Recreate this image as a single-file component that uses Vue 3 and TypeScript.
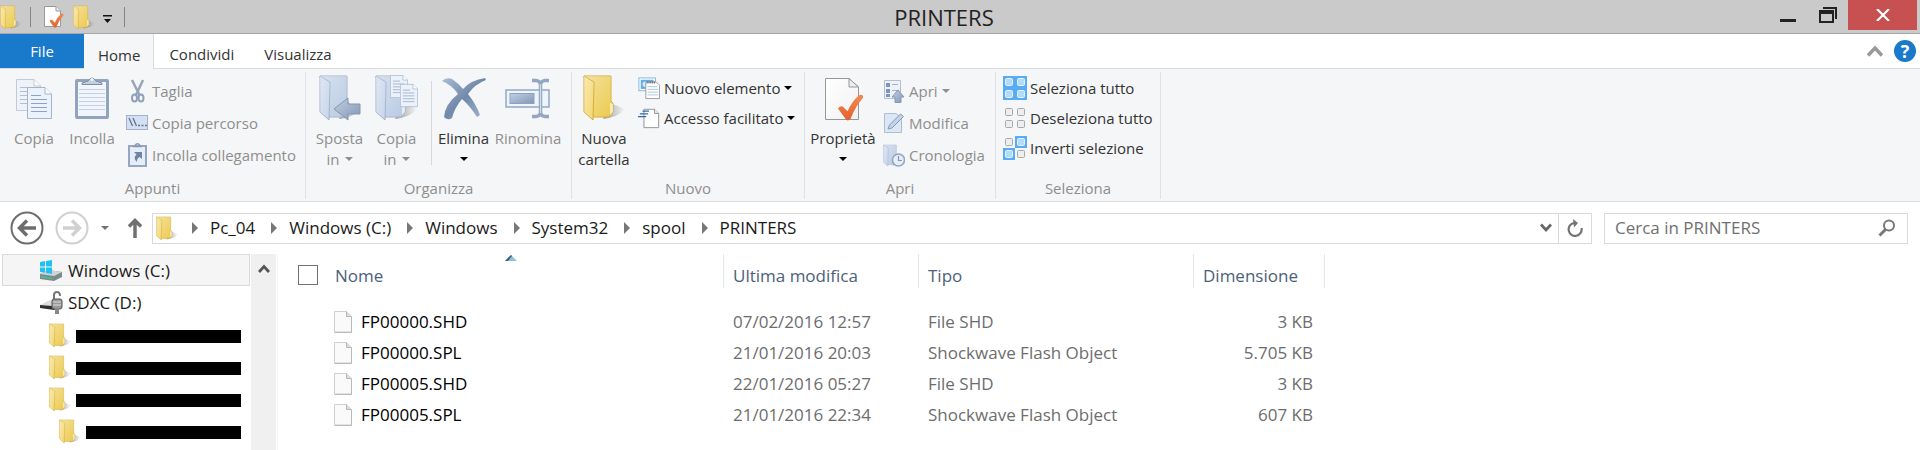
<script setup lang="ts">
import { ref } from 'vue'

interface BigItem {
  label: string
  second?: string
  icon: string
  menu?: boolean
  disabled?: boolean
  divided?: boolean
}
interface SmallItem {
  label: string
  icon: string
  menu?: boolean
  disabled?: boolean
}
interface Group {
  title: string
  key: string
  big: BigItem[]
  small: SmallItem[]
}
interface FileRow {
  name: string
  modified: string
  type: string
  size: string
}

const groups: Group[] = [
  {
    title: 'Appunti',
    key: 'clipboard',
    big: [
      { label: 'Copia', icon: 'copy', disabled: true },
      { label: 'Incolla', icon: 'paste', disabled: true },
    ],
    small: [
      { label: 'Taglia', icon: 'cut', disabled: true },
      { label: 'Copia percorso', icon: 'path', disabled: true },
      { label: 'Incolla collegamento', icon: 'paste-link', disabled: true },
    ],
  },
  {
    title: 'Organizza',
    key: 'organize',
    big: [
      { label: 'Sposta', second: 'in', icon: 'move-to', menu: true, disabled: true },
      { label: 'Copia', second: 'in', icon: 'copy-to', menu: true, disabled: true },
      { label: 'Elimina', icon: 'delete', menu: true, divided: true },
      { label: 'Rinomina', icon: 'rename', disabled: true },
    ],
    small: [],
  },
  {
    title: 'Nuovo',
    key: 'new',
    big: [{ label: 'Nuova', second: 'cartella', icon: 'folder' }],
    small: [
      { label: 'Nuovo elemento', icon: 'new-item', menu: true },
      { label: 'Accesso facilitato', icon: 'easy-access', menu: true },
    ],
  },
  {
    title: 'Apri',
    key: 'open',
    big: [{ label: 'Proprietà', icon: 'properties', menu: true }],
    small: [
      { label: 'Apri', icon: 'open', menu: true, disabled: true },
      { label: 'Modifica', icon: 'edit', disabled: true },
      { label: 'Cronologia', icon: 'history', disabled: true },
    ],
  },
  {
    title: 'Seleziona',
    key: 'select',
    big: [],
    small: [
      { label: 'Seleziona tutto', icon: 'select-all' },
      { label: 'Deseleziona tutto', icon: 'select-none' },
      { label: 'Inverti selezione', icon: 'select-invert' },
    ],
  },
]

const crumbs: string[] = ['Pc_04', 'Windows (C:)', 'Windows', 'System32', 'spool', 'PRINTERS']

const hiddenFolders: { id: number; deep: boolean }[] = [
  { id: 1, deep: false },
  { id: 2, deep: false },
  { id: 3, deep: false },
  { id: 4, deep: true },
]

const files: FileRow[] = [
  { name: 'FP00000.SHD', modified: '07/02/2016 12:57', type: 'File SHD', size: '3 KB' },
  { name: 'FP00000.SPL', modified: '21/01/2016 20:03', type: 'Shockwave Flash Object', size: '5.705 KB' },
  { name: 'FP00005.SHD', modified: '22/01/2016 05:27', type: 'File SHD', size: '3 KB' },
  { name: 'FP00005.SPL', modified: '21/01/2016 22:34', type: 'Shockwave Flash Object', size: '607 KB' },
]

const query = ref('')
const allSelected = ref(false)
</script>

<template>
  <div class="window">
    <svg class="sprites" aria-hidden="true">
      <defs>
        <linearGradient id="g-shine" x1="0" y1="0" x2="1" y2="1">
          <stop offset="0" stop-color="#fff" stop-opacity="0.45" />
          <stop offset="1" stop-color="#fff" stop-opacity="0" />
        </linearGradient>
        <linearGradient id="g-shadow" x1="0" y1="0" x2="1" y2="0">
          <stop offset="0" stop-color="#777" stop-opacity="0.7" />
          <stop offset="1" stop-color="#777" stop-opacity="0" />
        </linearGradient>
        <linearGradient id="g-x" x1="0" y1="0" x2="1" y2="1">
          <stop offset="0" stop-color="#a9bdd8" />
          <stop offset="0.5" stop-color="#7189aa" />
          <stop offset="1" stop-color="#a3b8d4" />
        </linearGradient>
        <linearGradient id="g-steel" x1="0" y1="0" x2="1" y2="1">
          <stop offset="0" stop-color="#c3d0e2" />
          <stop offset="1" stop-color="#8196b5" />
        </linearGradient>
        <linearGradient id="g-check" x1="0" y1="0" x2="0" y2="1">
          <stop offset="0" stop-color="#f08a55" />
          <stop offset="1" stop-color="#e2622c" />
        </linearGradient>
        <linearGradient id="g-page" x1="0" y1="0" x2="1" y2="1">
          <stop offset="0" stop-color="#fff" />
          <stop offset="1" stop-color="#f1f1f1" />
        </linearGradient>
      </defs>
      <symbol id="folder" viewBox="0 0 42 46">
        <path d="M27 28 L42 34 Q36 42 20 44 Z" fill="url(#g-shadow)" />
        <path d="M1 1 H28 V26 L30 28 V37 L26 42 H10 Z" fill="var(--folder)" stroke="var(--folder-line)" />
        <path d="M1 1 H28 V26 L30 28 V37 L26 42 H10 Z" fill="url(#g-shine)" />
        <path d="M27 28 L30 29 V37 L27 40 Z" fill="#fff" opacity="0.6" />
        <path d="M1 1 L11 7 L10 45 L1 37 Z" fill="var(--folder-dark)" stroke="var(--folder-line)" />
        <path d="M1 1 L11 7 L10 45 L1 37 Z" fill="url(#g-shine)" />
      </symbol>
      <symbol id="sheet" viewBox="0 0 25 32">
        <path d="M.5 .5 H18 L24.500 7 V31.500 H.5 Z" fill="#ecf2fb" stroke="#a3b4cc" />
        <path d="M18 .5 V7 H24.500" fill="#fff" stroke="#a3b4cc" />
        <path d="M4 8.500 H14 M4 12.500 H20 M4 16.500 H20 M4 20.500 H20 M4 24.500 H20" stroke="#8fa2bf" />
      </symbol>
      <symbol id="copy" viewBox="0 0 42 46">
        <use href="#sheet" x="3" y="4" width="25" height="32" opacity="0.65" />
        <use href="#sheet" x="14" y="12" width="25" height="32" />
      </symbol>
      <symbol id="paste" viewBox="0 0 42 46">
        <rect x="4" y="4" width="34" height="40" rx="2" fill="#92a3bd" />
        <path d="M7 7 H35 V41 H7 Z" fill="#f1f5fc" />
        <path d="M8 14.500 H34 M8 18.500 H34 M8 22.500 H34 M8 26.500 H34 M8 30.500 H34 M8 34.500 H34" stroke="#c5d1e3" />
        <path d="M11 9.500 H31 V8 L25 6 Q21 0 17 6 L11 8 Z" fill="#c4cedd" stroke="#7d8ea9" />
        <circle cx="21" cy="4.500" r="1.500" fill="#f4f6f8" />
      </symbol>
      <symbol id="cut" viewBox="0 0 22 24">
        <path d="M6 1 L13.500 16 M17 1 L10 16" stroke="#97a5bb" stroke-width="2.500" />
        <ellipse cx="8.500" cy="19" rx="2.500" ry="3.500" fill="none" stroke="#8fa0b9" stroke-width="2" />
        <ellipse cx="15" cy="19" rx="2.500" ry="3.500" fill="none" stroke="#8fa0b9" stroke-width="2" />
      </symbol>
      <symbol id="path" viewBox="0 0 22 24">
        <rect x=".5" y="4.500" width="21" height="14" fill="#d5e1f2" stroke="#a1b2cc" />
        <path d="M3 7 L6.500 15 M7 7 L10.500 15" stroke="#61738f" stroke-width="1.300" />
        <path d="M12 14.500 h2 M15.500 14.500 h2 M19 14.500 h2" stroke="#61738f" stroke-width="1.600" />
      </symbol>
      <symbol id="paste-link" viewBox="0 0 22 24">
        <rect x="3" y="3" width="17" height="20" fill="#e5edf8" stroke="#94a6c2" stroke-width="2" />
        <path d="M7 3.500 h9 M9 2.500 Q11.500 -1 14 2.500" fill="none" stroke="#8798b4" stroke-width="1.500" />
        <path d="M8 9 H16 V16 L13.500 14 Q10.500 16 11 19 Q6.500 15 10.500 11.500 Z" fill="#6f83a4" />
      </symbol>
      <symbol id="move-to" viewBox="0 0 42 46">
        <use href="#folder" width="42" height="46" class="folder-off" />
        <path d="M15 34 L29 23 V29 H41 V39 H29 V45 Z" fill="url(#g-steel)" stroke="#8396b3" />
      </symbol>
      <symbol id="copy-to" viewBox="0 0 44 46">
        <use href="#folder" width="42" height="46" class="folder-off" />
        <use href="#sheet" x="15" y="0" width="18" height="23" />
        <use href="#sheet" x="25" y="8" width="18" height="25" />
      </symbol>
      <symbol id="delete" viewBox="0 0 46 46">
        <path d="M1 6 Q5 2 11 4 Q17 8 22 14 Q30 5 44 3 L45 5 Q34 9 27 19 Q35 29 39 40 L36 42 Q29 31 21 24 Q14 32 11 43 Q7 46 3 42 Q4 29 17 19 Q11 10 1 6 Z" fill="url(#g-x)" />
      </symbol>
      <symbol id="rename" viewBox="0 0 46 46">
        <rect x="1" y="15" width="43" height="17" fill="#edf4fc" stroke="#91a8c7" stroke-width="1.500" />
        <rect x="5" y="18.500" width="24" height="10" fill="url(#g-steel)" stroke="#8ea2bf" />
        <path d="M27 5.500 H31 Q35.500 6 35.500 10 V37 Q35.500 41 31 41.500 H27 M44 5.500 H40 Q35.500 6 35.500 10 M44 41.500 H40 Q35.500 41 35.500 37" fill="none" stroke="#93a7c3" stroke-width="3.500" />
        <path d="M35.500 9 V38" stroke="#cfdbea" stroke-width="1.200" />
      </symbol>
      <symbol id="new-item" viewBox="0 0 24 24">
        <rect x="1" y="1" width="18" height="14" fill="#fff" stroke="#7fb3dc" />
        <rect x="3" y="3" width="14" height="10" fill="#64aee6" />
        <circle cx="8" cy="8" r="3" fill="#d5edfb" />
        <path d="M8.500 5.500 H20 L23.500 9 V23.500 H8.500 Z" fill="#fdfdfd" stroke="#999" />
        <path d="M10 5 v2 M12 5 v2 M14 5 v2 M16 5 v2 M18 5 v2" stroke="#555" />
        <path d="M10.500 10.500 H21 M10.500 13.500 H22 M10.500 16.500 H22 M10.500 19.500 H22" stroke="#a9c4da" />
      </symbol>
      <symbol id="easy-access" viewBox="0 0 24 24">
        <path d="M6.500 2.500 H18 L22.500 7 V22.500 H6.500 Z" fill="#fff" stroke="#8d8d8d" />
        <path d="M18 2.500 V7 H22.500" fill="#eee" stroke="#8d8d8d" />
        <path d="M5 4.500 H12 M2 7.500 H11 M0 10.500 H9" stroke="#2d6bb2" stroke-width="1.500" />
      </symbol>
      <symbol id="check" viewBox="0 0 28 28">
        <path d="M1 15 Q4 11 7 14 L11 18 Q15 8 23 1 Q28 0 27 4 Q19 13 14 26 Q11 29 9 26 Z" fill="url(#g-check)" />
      </symbol>
      <symbol id="properties" viewBox="0 0 42 46">
        <path d="M3.500 3.500 H27 L36.500 12 V44.500 H3.500 Z" fill="url(#g-page)" stroke="#979797" />
        <path d="M27 3.500 V12 H36.500 Z" fill="#eee" stroke="#979797" />
        <use href="#check" x="15" y="19" width="27" height="27" />
      </symbol>
      <symbol id="open" viewBox="0 0 22 24">
        <path d="M1.500 1.500 H17.500 V19.500 H1.500 Z" fill="#edf2fa" stroke="#b2bfd2" />
        <path d="M3 4 h4 v4 h-4 Z M3 10 h4 v4 h-4 Z M3 15 h4 v3 h-4 Z" fill="#7e94b8" />
        <path d="M9 5.500 h6 M9 11.500 h6" stroke="#a2b1c8" />
        <path d="M15 11 L21 18 H18 V23.500 H12 V18 H9 Z" fill="url(#g-steel)" stroke="#8698b3" />
      </symbol>
      <symbol id="edit" viewBox="0 0 22 24">
        <path d="M1.500 2.500 H13 L18.500 7 V21.500 H1.500 Z" fill="#dce7f6" stroke="#adbdd4" />
        <path d="M5 18 L6.500 14 L17.500 3 L20.500 5.500 L9 17 Z" fill="#c5d3e8" stroke="#8499b8" />
      </symbol>
      <symbol id="history" viewBox="0 0 22 24">
        <use href="#folder" x="0" y="1" width="20" height="23" class="folder-off" />
        <circle cx="15.500" cy="17" r="6" fill="#e7eef8" stroke="#90a4c1" stroke-width="1.500" />
        <path d="M15.500 13 V17.500 H19" fill="none" stroke="#8297b6" stroke-width="1.200" />
      </symbol>
      <symbol id="tile-on" viewBox="0 0 12 12">
        <rect width="12" height="12" fill="#5aabf5" />
        <rect x="2.500" y="2.500" width="7" height="7" rx="1" fill="#b4dcfa" stroke="#e2f2fe" />
      </symbol>
      <symbol id="tile-off" viewBox="0 0 12 12">
        <rect x="2.500" y="2.500" width="7" height="7" rx="1" fill="#eee" stroke="#a8a8a8" />
      </symbol>
      <symbol id="select-all" viewBox="0 0 24 24">
        <use href="#tile-on" width="12" height="12" />
        <use href="#tile-on" x="12" width="12" height="12" />
        <use href="#tile-on" y="12" width="12" height="12" />
        <use href="#tile-on" x="12" y="12" width="12" height="12" />
      </symbol>
      <symbol id="select-none" viewBox="0 0 24 24">
        <use href="#tile-off" width="12" height="12" />
        <use href="#tile-off" x="12" width="12" height="12" />
        <use href="#tile-off" y="12" width="12" height="12" />
        <use href="#tile-off" x="12" y="12" width="12" height="12" />
      </symbol>
      <symbol id="select-invert" viewBox="0 0 24 24">
        <use href="#tile-off" width="12" height="12" />
        <use href="#tile-on" x="12" width="12" height="12" />
        <use href="#tile-on" y="12" width="12" height="12" />
        <use href="#tile-off" x="12" y="12" width="12" height="12" />
      </symbol>
      <symbol id="file" viewBox="0 0 18 22">
        <path d="M.5 .5 H12.500 L17.500 5.500 V21 H.5 Z" fill="#fafafa" stroke="#cfcfcf" />
        <path d="M.5 21.500 H17.500 V6" fill="none" stroke="#b9b9b9" />
        <path d="M12.500 .5 V5.500 H17.500" fill="#ddd" stroke="#b5b5b5" />
      </symbol>
      <symbol id="caret" viewBox="0 0 8 4">
        <path d="M0 0 H8 L4 4 Z" fill="currentColor" />
      </symbol>
    </svg>

    <header class="titlebar">
      <div class="quick">
        <button class="plain" type="button" aria-label="Finestra"><svg class="i-folder"><use href="#folder" /></svg></button>
        <span class="bar"></span>
        <button class="plain" type="button" aria-label="Proprietà">
          <svg class="i-quick" viewBox="0 0 22 24">
            <path d="M1.500 1.500 H13 L17.500 6 V21.500 H1.500 Z" fill="#fff" stroke="#999" />
            <path d="M13 1.500 V6 H17.500" fill="#eee" stroke="#999" />
            <use href="#check" x="6" y="8" width="15" height="15" />
          </svg>
        </button>
        <button class="plain" type="button" aria-label="Nuova cartella"><svg class="i-folder"><use href="#folder" /></svg></button>
        <button class="plain" type="button" aria-label="Personalizza">
          <svg class="i-custom" viewBox="0 0 9 9"><path d="M0 0 H9 V1.500 H0 Z M1 4 H8 L4.500 8 Z" fill="#111" /></svg>
        </button>
        <span class="bar"></span>
      </div>
      <h1>PRINTERS</h1>
      <div class="controls">
        <button class="plain" type="button" aria-label="Riduci a icona">
          <svg class="i-ctl" viewBox="0 0 20 20"><path d="M2 14 H18 V17 H2 Z" fill="#222" /></svg>
        </button>
        <button class="plain" type="button" aria-label="Ripristina">
          <svg class="i-ctl" viewBox="0 0 20 20">
            <path d="M5 2 H19 V14 H17 V4 H5 Z" fill="#222" />
            <path fill-rule="evenodd" d="M1 5 H16 V18 H1 Z M3 9 V16 H14 V9 Z" fill="#222" />
          </svg>
        </button>
        <button class="plain close" type="button" aria-label="Chiudi">
          <svg class="i-close" viewBox="0 0 14 12"><path d="M1 0 L13 12 M13 0 L1 12" stroke="#fff" stroke-width="2.200" /></svg>
        </button>
      </div>
    </header>

    <nav class="tabs">
      <button class="tab file" type="button">File</button>
      <button class="tab active" type="button">Home</button>
      <button class="tab" type="button">Condividi</button>
      <button class="tab" type="button">Visualizza</button>
      <div class="tab-tools">
        <button class="plain" type="button" aria-label="Riduci barra multifunzione">
          <svg class="i-collapse" viewBox="0 0 16 12"><path d="M1 10.500 L8 3 L15 10.500" fill="none" stroke="#999" stroke-width="3.500" /></svg>
        </button>
        <button class="plain help" type="button">?</button>
      </div>
    </nav>

    <section class="ribbon">
      <div v-for="g in groups" :key="g.key" class="group" :class="g.key">
        <div class="group-body">
          <button
            v-for="b in g.big"
            :key="b.icon"
            class="big"
            :class="{ off: b.disabled, divided: b.divided }"
            type="button"
            :disabled="b.disabled"
          >
            <svg class="i-big"><use :href="'#' + b.icon" /></svg>
            <span class="line">{{ b.label }}</span>
            <span v-if="b.second || b.menu" class="line">
              <template v-if="b.second">{{ b.second }}</template>
              <svg v-if="b.menu" class="i-caret"><use href="#caret" /></svg>
            </span>
          </button>
          <div v-if="g.small.length" class="small-col">
            <button
              v-for="s in g.small"
              :key="s.icon"
              class="small"
              :class="{ off: s.disabled }"
              type="button"
              :disabled="s.disabled"
            >
              <svg class="i-small"><use :href="'#' + s.icon" /></svg>
              <span>{{ s.label }}</span>
              <svg v-if="s.menu" class="i-caret"><use href="#caret" /></svg>
            </button>
          </div>
        </div>
        <div class="group-title">{{ g.title }}</div>
      </div>
    </section>

    <div class="navbar">
      <button class="plain" type="button" aria-label="Indietro">
        <svg class="i-nav" viewBox="0 0 34 34">
          <circle cx="17" cy="17" r="15.500" fill="none" stroke="#6d6d6d" stroke-width="2" />
          <path d="M17 9.500 L9.500 17 L17 24.500 M10 17 H26" fill="none" stroke="#6d6d6d" stroke-width="3.500" />
        </svg>
      </button>
      <button class="plain forward" type="button" aria-label="Avanti">
        <svg class="i-nav" viewBox="0 0 34 34">
          <circle cx="17" cy="17" r="15.500" fill="none" stroke="#d0d0d0" stroke-width="2" />
          <path d="M17 9.500 L24.500 17 L17 24.500 M24 17 H8" fill="none" stroke="#d0d0d0" stroke-width="3.500" />
        </svg>
      </button>
      <button class="plain recent" type="button" aria-label="Percorsi recenti"><svg class="i-caret"><use href="#caret" /></svg></button>
      <button class="plain up" type="button" aria-label="Su">
        <svg class="i-up" viewBox="0 0 16 20"><path d="M2 8.500 L8 2.500 L14 8.500 M8 3 V20" fill="none" stroke="#707070" stroke-width="3.500" /></svg>
      </button>
      <div class="address">
        <svg class="i-folder"><use href="#folder" /></svg>
        <div class="crumbs">
          <span v-for="c in crumbs" :key="c" class="crumb">
            <svg class="i-sep" viewBox="0 0 6 12"><path d="M0 0 L6 6 L0 12 Z" fill="#777" /></svg>
            <a href="#">{{ c }}</a>
          </span>
        </div>
        <button class="plain drop" type="button" aria-label="Percorsi precedenti">
          <svg class="i-drop" viewBox="0 0 12 10"><path d="M1 1.500 L6 7 L11 1.500" fill="none" stroke="#666" stroke-width="2.800" /></svg>
        </button>
        <button class="plain refresh" type="button" aria-label="Aggiorna">
          <svg class="i-refresh" viewBox="0 0 18 18">
            <path d="M8 4 A6.500 6.500 0 1 0 15.500 9" fill="none" stroke="#737373" stroke-width="2.200" />
            <path d="M7 0 L12 4 L8 8.500 Z" fill="#737373" />
          </svg>
        </button>
      </div>
      <form class="search" @submit.prevent>
        <input v-model="query" type="text" placeholder="Cerca in PRINTERS" aria-label="Cerca in PRINTERS" />
        <button class="plain" type="submit" aria-label="Cerca">
          <svg class="i-search" viewBox="0 0 18 18">
            <circle cx="11" cy="6.500" r="5" fill="none" stroke="#777" stroke-width="2" />
            <path d="M7.500 10.500 L1.500 16.500" stroke="#777" stroke-width="3" />
          </svg>
        </button>
      </form>
    </div>

    <main class="content">
      <nav class="tree">
        <a class="node current" href="#">
          <svg class="i-drive" viewBox="0 0 24 24">
            <path d="M1 15 L9 11 L23 13 V18 L15 22 L1 20 Z" fill="#7b8b8b" />
            <path d="M1 15 L9 11 L23 13 L15 17 Z" fill="#cfd4d4" />
            <path d="M2 17 L13 19 V20 L2 18.500 Z" fill="#3ec79a" />
            <path d="M1 3 L6 2 V7.500 H1 Z M7 2 L13 1 V7.500 H7 Z M1 8.500 H6 V13.500 L1 13 Z M7 8.500 H13 V15 L7 14 Z" fill="#1fc3f3" />
          </svg>
          <span>Windows (C:)</span>
        </a>
        <a class="node" href="#">
          <svg class="i-drive" viewBox="0 0 24 24">
            <path d="M1 14 L11 9 L21 11 L14 15 Z" fill="#ddd" />
            <path d="M1 14 L14 15 L21 12 V16 L15 19 L1 17 Z" fill="#303030" />
            <path d="M15 8 V4 Q15 1 18 1 Q21 1 21 5" fill="none" stroke="#777" stroke-width="2" />
            <rect x="13" y="8" width="10" height="10" rx="2" fill="#999" stroke="#555" />
            <path d="M14 11 H22 M14 14 H22" stroke="#ddd" />
            <path d="M18 17 V23" stroke="#888" stroke-width="4" />
          </svg>
          <span>SDXC (D:)</span>
        </a>
        <a v-for="f in hiddenFolders" :key="f.id" class="node sub" :class="{ deep: f.deep }" href="#" aria-label="Cartella">
          <svg class="i-folder"><use href="#folder" /></svg>
          <span class="redacted"></span>
        </a>
      </nav>
      <div class="scroll">
        <button class="plain" type="button" aria-label="Scorri su">
          <svg class="i-drop" viewBox="0 0 12 10"><path d="M1 8 L6 2.500 L11 8" fill="none" stroke="#555" stroke-width="2.800" /></svg>
        </button>
      </div>
      <div class="list">
        <table>
          <colgroup>
            <col class="c-check" />
            <col class="c-name" />
            <col class="c-date" />
            <col class="c-type" />
            <col class="c-size" />
          </colgroup>
          <thead>
            <tr>
              <th><div class="head first"><input v-model="allSelected" type="checkbox" aria-label="Seleziona tutto" /></div></th>
              <th scope="col">
                <div class="head">
                  Nome
                  <svg class="i-sort" viewBox="0 0 12 6"><path d="M0 6 L6 0 L12 6 Z" fill="#8fc3dc" /><path d="M0 6 L6 0 L7 1 L3 6 Z" fill="#38607a" /></svg>
                </div>
              </th>
              <th scope="col"><div class="head">Ultima modifica</div></th>
              <th scope="col"><div class="head">Tipo</div></th>
              <th scope="col"><div class="head">Dimensione</div></th>
            </tr>
          </thead>
          <tbody>
            <tr v-for="f in files" :key="f.name">
              <td></td>
              <td class="name"><span><svg class="i-file"><use href="#file" /></svg>{{ f.name }}</span></td>
              <td>{{ f.modified }}</td>
              <td>{{ f.type }}</td>
              <td class="size">{{ f.size }}</td>
            </tr>
          </tbody>
        </table>
      </div>
    </main>
  </div>
</template>

<style>
body {
  background: #fff;
}
</style>

<style scoped>
.window {
  --folder: #ecca4e;
  --folder-dark: #f3d770;
  --folder-line: #d3ab36;
  display: flex;
  flex-direction: column;
  min-height: 100vh;
  overflow: hidden;
  font-family: "Open Sans", "Noto Sans", sans-serif;
  font-size: 17px;
  line-height: 20px;
  color: #1a1a1a;
}
*,
*::before {
  box-sizing: border-box;
}
svg {
  display: block;
  flex: none;
}
.sprites {
  position: absolute;
  width: 0;
  height: 0;
}
.folder-off {
  --folder: #b9cae2;
  --folder-dark: #c6d5ea;
  --folder-line: #a0b2cd;
}
button {
  border: 0;
  padding: 0;
  background: none;
  font: inherit;
  color: inherit;
}
a {
  color: inherit;
  text-decoration: none;
}
.plain {
  display: flex;
  align-items: center;
  justify-content: center;
}
.i-folder { width: 22px; height: 25px; }
.i-quick { width: 22px; height: 24px; }
.i-custom { width: 9px; height: 9px; }
.i-ctl { width: 20px; height: 20px; }
.i-close { width: 14px; height: 12px; }
.i-collapse { width: 16px; height: 12px; }
.i-big { width: 46px; height: 46px; }
.i-small { width: 22px; height: 24px; }
.i-caret { width: 8px; height: 4px; }
.i-nav { width: 34px; height: 34px; }
.i-up { width: 16px; height: 20px; }
.i-sep { width: 6px; height: 12px; }
.i-drop { width: 12px; height: 10px; }
.i-refresh { width: 18px; height: 18px; }
.i-search { width: 18px; height: 18px; }
.i-drive { width: 24px; height: 24px; }
.i-file { width: 18px; height: 22px; }

/* Title bar */
.titlebar {
  display: grid;
  grid-template-columns: 1fr auto 1fr;
  height: 34px;
  background: #cacaca;
  border-bottom: 1px solid #a6a6a6;
}
.quick {
  display: flex;
  align-items: center;
  gap: 8px;
  padding-bottom: 1px;
}
.quick .bar + .plain {
  margin-left: 4px;
}
.quick .i-custom {
  margin: 4px 4px 0 0;
}
.bar {
  width: 1px;
  height: 20px;
  background: #858585;
}
h1 {
  margin: 0 32px 0 0;
  font-size: 22px;
  line-height: 35px;
  font-weight: 400;
  color: #222;
}
.controls {
  display: flex;
  justify-content: flex-end;
  align-items: flex-start;
  padding-right: 3px;
}
.controls .plain {
  width: 40px;
  height: 30px;
}
.controls .close {
  width: 69px;
  background: #c75050;
}

/* Tabs */
.tabs {
  display: flex;
  height: 35px;
  border-bottom: 1px solid #d9dbdd;
  font-size: 15px;
  color: #333;
}
.tab {
  padding: 6px 15px 0;
}
.tab.file {
  width: 84px;
  padding: 0;
  background: #1979ca;
  color: #fff;
}
.tab.active {
  height: 35px;
  padding: 6px 13px 0 14px;
  border-right: 1px solid #d9dbdd;
  background: #f5f6f7;
}
.tab-tools {
  display: flex;
  align-items: center;
  gap: 11px;
  margin-left: auto;
  padding-right: 4px;
}
.help {
  width: 22px;
  height: 22px;
  border-radius: 50%;
  background: #1979ca;
  color: #fff;
  font-size: 18px;
  font-weight: 700;
}

/* Ribbon */
.ribbon {
  display: flex;
  height: 133px;
  border-bottom: 1px solid #d9dbdd;
  background: #f5f6f7;
  font-size: 15px;
  color: #333;
}
.group {
  display: flex;
  flex-direction: column;
  justify-content: space-between;
  margin: 3px 0 2px;
  border-right: 1px solid #dfe1e3;
}
.group-body {
  display: flex;
  padding: 3px 5px 0;
}
.group-title {
  padding-bottom: 1px;
  text-align: center;
  color: #8e8e8e;
}
.clipboard { width: 306px; }
.organize { width: 266px; }
.new { width: 233px; }
.open { width: 191px; }
.select { width: 165px; }
.big {
  display: flex;
  flex-direction: column;
  align-items: center;
  width: 58px;
  white-space: nowrap;
}
.organize .big { width: 57px; }
.organize .big:last-child { width: 72px; }
.open .big { width: 66px; }
.new .group-body { padding-left: 3px; }
.big .i-big {
  margin-bottom: 6px;
}
.big.divided {
  position: relative;
  margin-left: 10px;
}
.big.divided::before {
  content: "";
  position: absolute;
  left: -4px;
  top: 6px;
  width: 1px;
  height: 84px;
  background: #d6d8da;
}
.line {
  display: flex;
  align-items: center;
  justify-content: center;
  gap: 5px;
  height: 21px;
}
.off {
  color: #8e8e8e;
}
.small-col {
  display: flex;
  flex-direction: column;
  margin-left: 5px;
}
.small {
  display: flex;
  align-items: center;
  gap: 4px;
  height: 32px;
  white-space: nowrap;
}
.new .small,
.select .small {
  height: 30px;
}
.new .small-col,
.select .small-col {
  margin-top: -2px;
}
.open .small-col { margin-left: 7px; }
.select .small-col { margin-left: 2px; }
.select .small { gap: 3px; }
.select .i-small { width: 24px; }
.big:not(.off) .i-caret,
.small:not(.off) .i-caret {
  color: #000;
}

/* Navigation bar */
.navbar {
  display: flex;
  align-items: center;
  height: 52px;
  padding: 0 12px 0 10px;
}
.forward { margin-left: 11px; }
.recent { margin-left: 12px; color: #707070; }
.up { margin: 0 9px 0 18px; }
.address {
  display: flex;
  align-items: center;
  flex: 1;
  height: 31px;
  padding-left: 3px;
  border: 1px solid #d9d9d9;
}
.crumbs {
  display: flex;
  flex: 1;
}
.crumb {
  display: flex;
  align-items: center;
  gap: 12px;
  margin-left: 16px;
}
.crumb:first-child {
  margin-left: 14px;
}
.drop {
  width: 24px;
  height: 29px;
}
.refresh {
  width: 33px;
  height: 29px;
  border-left: 1px solid #d9d9d9;
}
.search {
  display: flex;
  align-items: center;
  width: 304px;
  height: 31px;
  margin-left: 12px;
  padding: 0 11px 0 10px;
  border: 1px solid #d9d9d9;
}
.search input {
  flex: 1;
  min-width: 0;
  padding: 0;
  border: 0;
  outline: 0;
  background: none;
  font: inherit;
}
.search input::placeholder {
  color: #707070;
  opacity: 1;
}

/* Content */
.content {
  display: flex;
  flex: 1;
}
.tree {
  width: 248px;
  margin: 0 1px 0 2px;
}
.node {
  display: flex;
  align-items: center;
  gap: 5px;
  height: 32px;
  padding: 2px 8px 0 36px;
  border: 1px solid transparent;
}
.node.current {
  background: #f5f5f5;
  border-color: #dadada;
}
.node.sub { padding-left: 46px; }
.node.deep { padding-left: 56px; }
.redacted {
  flex: 1;
  height: 13px;
  margin-top: 2px;
  background: #000;
}
.scroll {
  width: 25px;
  background: #f0f0f0;
}
.scroll .plain {
  width: 25px;
  height: 30px;
}
.list {
  flex: 1;
  margin-left: 1px;
  border-left: 1px solid #f5f5f5;
  padding-left: 20px;
}
table {
  width: 1027px;
  table-layout: fixed;
  border-collapse: collapse;
}
.c-check { width: 28px; }
.c-name { width: 398px; }
.c-date { width: 195px; }
.c-type { width: 275px; }
.c-size { width: 131px; }
th {
  padding: 0 0 18px;
  font-weight: 400;
  text-align: left;
  color: #4c607a;
}
.head {
  position: relative;
  display: flex;
  align-items: center;
  height: 34px;
  padding: 9px 0 0 9px;
  border-right: 1px solid #e3e8ee;
}
.head.first {
  padding: 7px 0 0;
  border: 0;
}
.i-sort {
  position: absolute;
  left: 179px;
  top: 1px;
  width: 12px;
  height: 6px;
}
.head input {
  appearance: none;
  width: 20px;
  height: 20px;
  margin: 0;
  border: 1px solid #707070;
  background: #fff;
}
.head input:checked {
  background: #1979ca;
}
td {
  height: 31px;
  padding: 0 12px 0 9px;
  color: #6d6d6d;
}
.name {
  padding-left: 8px;
  color: #000;
}
.name span {
  display: flex;
  align-items: center;
  gap: 9px;
}
.size {
  text-align: right;
}
</style>
